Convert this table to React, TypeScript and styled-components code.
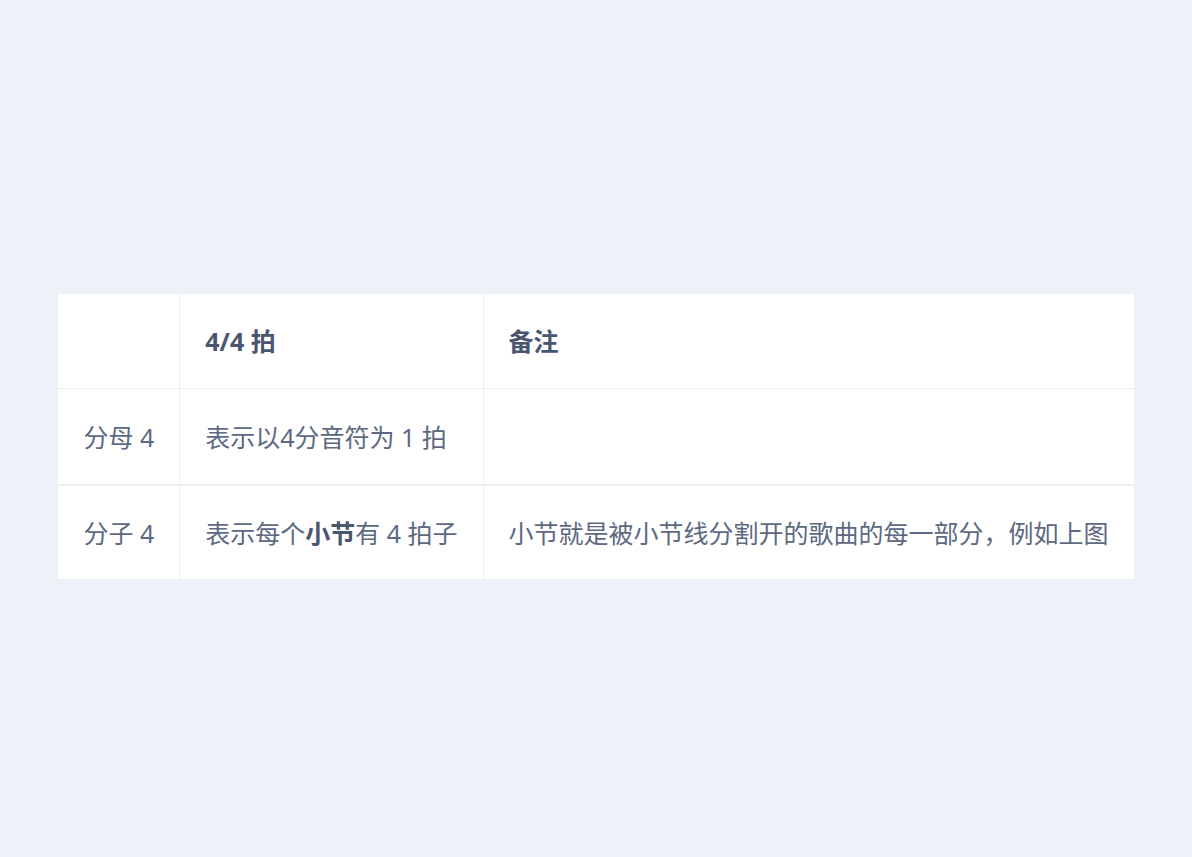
import React from "react";
import styled, { createGlobalStyle } from "styled-components";

const Global = createGlobalStyle`
  html, body {
    margin: 0;
    padding: 0;
    background: #edf2f9;
  }
  body {
    font-family: "Noto Sans", "Noto Sans CJK SC", sans-serif;
  }
`;

const Page = styled.div`
  min-height: 857px;
  box-sizing: border-box;
  padding-top: 294px;
  display: flex;
  justify-content: center;
  align-items: flex-start;
`;

const Table = styled.table`
  border-collapse: collapse;
  background: #ffffff;
  font-size: 25px;
  color: #5d6982;
`;

const Row = styled.tr<{ $line?: number }>`
  border-bottom: ${(p) => (p.$line ? `${p.$line}px solid #eeeff2` : "none")};
`;

const HeadCell = styled.th`
  height: 94px;
  padding: 0 25px;
  text-align: left;
  font-weight: 700;
  color: #4a5570;
  white-space: nowrap;
  border-left: 1px solid #eeeff2;
  line-height: 36px;
  &:first-child {
    border-left: none;
  }
`;

const Cell = styled.td<{ $h?: number }>`
  height: ${(p) => p.$h ?? 94}px;
  padding: 0 25px;
  white-space: nowrap;
  line-height: 36px;
  border-left: 1px solid #eeeff2;
  &:first-child {
    border-left: none;
  }
`;

const Strong = styled.strong`
  font-weight: 700;
  color: #4a5570;
`;

export default function App() {
  return (
    <>
      <Global />
      <Page>
        <Table>
          <thead>
            <Row $line={1}>
              <HeadCell></HeadCell>
              <HeadCell>4/4 拍</HeadCell>
              <HeadCell>备注</HeadCell>
            </Row>
          </thead>
          <tbody>
            <Row $line={2}>
              <Cell $h={95}>分母 4</Cell>
              <Cell $h={95}>表示以4分音符为 1 拍</Cell>
              <Cell $h={95}></Cell>
            </Row>
            <Row>
              <Cell $h={93}>分子 4</Cell>
              <Cell $h={93}>
                表示每个<Strong>小节</Strong>有 4 拍子
              </Cell>
              <Cell $h={93}>小节就是被小节线分割开的歌曲的每一部分，例如上图</Cell>
            </Row>
          </tbody>
        </Table>
      </Page>
    </>
  );
}
